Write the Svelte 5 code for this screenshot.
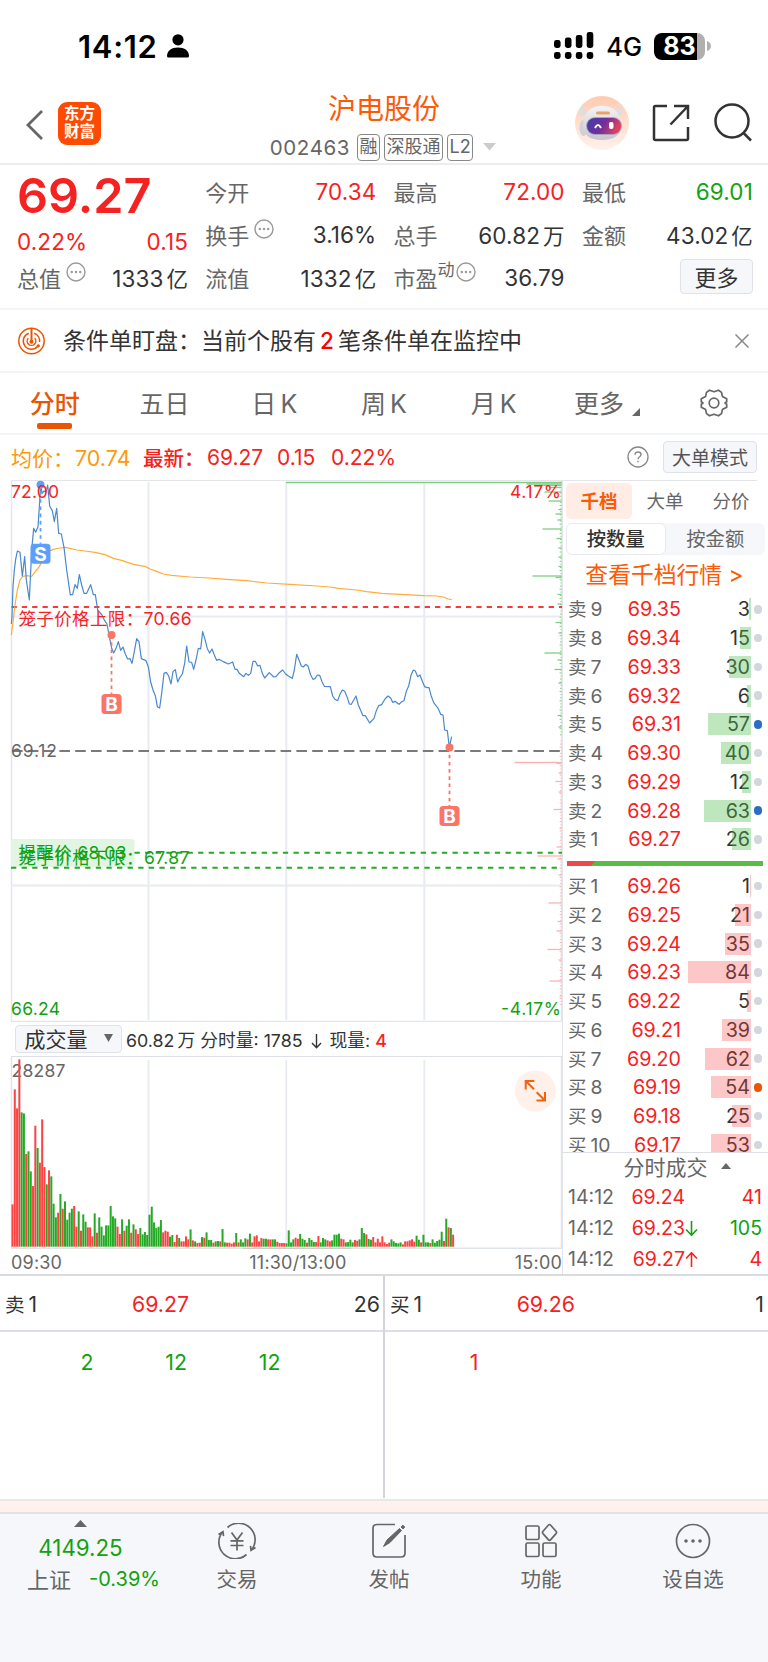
<script>
  const sells = [
    [9, '69.35', 3], [8, '69.34', 15], [7, '69.33', 30], [6, '69.32', 6], [5, '69.31', 57, 'blue'],
    [4, '69.30', 40], [3, '69.29', 12], [2, '69.28', 63, 'blue'], [1, '69.27', 26]
  ];
  const buys = [
    [1, '69.26', 1], [2, '69.25', 21], [3, '69.24', 35], [4, '69.23', 84], [5, '69.22', 5],
    [6, '69.21', 39], [7, '69.20', 62], [8, '69.19', 54, 'orange'], [9, '69.18', 25], [10, '69.17', 53]
  ];
  const trades = [
    { price: '69.24', arrow: '', qty: 41, dir: 'red' },
    { price: '69.23', arrow: 'down', qty: 105, dir: 'green' },
    { price: '69.27', arrow: 'up', qty: 4, dir: 'red' }
  ];
  const tabs = ['五日', '日 K', '周 K', '月 K'];

  // minute series, in thirds of a pixel
  const price = '34,462 36,440 39,350 43,300 47,268 52,243 60,247 67,318 74,260 79,330 88,390 95,240 101,175 107,187 114,170 118,110 122,45 126,70 132,63 138,66 143,45 149,108 157,122 163,155 170,115 176,190 184,192 192,232 200,300 211,375 218,373 225,344 232,355 238,314 245,345 252,370 260,370 272,344 280,374 286,374 293,420 306,435 314,452 321,462 328,500 335,535 341,549 348,535 355,515 362,541 369,531 376,552 383,567 390,566 396,580 403,545 410,506 417,515 424,566 438,572 445,590 452,636 459,660 466,677 472,710 479,714 485,670 492,610 499,607 506,618 513,642 519,605 526,599 533,636 540,622 547,612 554,580 560,528 567,576 575,577 581,598 588,570 595,535 602,537 608,485 615,508 622,536 629,549 636,537 643,555 650,571 657,568 670,575 685,582 698,576 705,598 711,598 718,610 731,620 738,610 745,616 752,610 759,574 766,574 773,588 780,586 787,610 794,624 808,608 821,621 828,620 838,608 848,600 857,612 865,618 870,621 877,625 883,600 890,553 897,570 904,588 910,591 917,583 924,588 932,615 939,628 945,626 952,615 959,616 966,635 973,649 991,650 998,678 1005,688 1013,692 1020,673 1027,660 1034,664 1041,680 1048,702 1054,703 1068,678 1075,705 1089,737 1096,737 1109,759 1122,745 1129,722 1136,707 1145,704 1155,687 1164,678 1172,684 1178,697 1185,694 1197,703 1204,696 1212,692 1219,664 1226,648 1233,616 1240,600 1246,603 1253,620 1260,615 1267,634 1274,650 1281,653 1287,653 1294,679 1301,698 1315,716 1322,733 1329,735 1334,780 1342,782 1348,832 1353,808 1355,800';
  const average = '34,495 40,450 45,405 52,360 60,330 68,319 80,317 95,319 107,303 118,290 130,265 145,245 160,238 180,234 196,232 210,235 230,240 255,243 285,247 315,254 340,265 365,271 400,283 438,290 450,297 470,304 490,312 515,316 570,321 625,324 680,328 740,332 800,339 870,343 950,348 990,351 1015,355 1070,360 1100,365 1145,370 1200,373 1272,377 1310,378 1330,381 1345,387 1355,389';

  // one bar per minute: height + r/g
  const volume = ('127r 472r 415r 562r 403g 400g 278r 286g 226g 182r 363r 296g 252r 382r 239r 187g 229r 211g 129g 88g ' +
    '102r 158g 114r 136g 81g 102g 114g 122r 60r 106g 48r 97g 75g 58r 58r 31r 100g 42r 88g 60g ' +
    '34g 64g 64g 122g 91g 85g 60r 38r 82g 48r 63g 82g 42r 67g 52r 38r 56g 37g 44g 35g ' +
    '96g 120g 73g 56g 60g 80g 43r 48r 45r 30g 35g 14r 36r 26g 16r 16r 31r 22r 52g 19r ' +
    '16g 11r 12r 29g 27r 43g 20g 20g 12r 16g 17g 16r 53g 13g 12r 12r 9r 13r 41g 13r ' +
    '22g 13g 25g 22r 39g 13r 31r 34r 16r 26r 24g 24g 22r 22r 22g 22g 15r 11r 11r 11r ' +
    '10g 49g 13g 22g 27r 24r 38g 24g 20g 12r 26g 20g 14g 14r 32r 13g 26g 22g 19r 16r ' +
    '19g 36g 36g 39g 24r 22r 13g 14g 21g 13g 20r 18r 22g 56g 41g 37r 23g 21g 29r 13r ' +
    '24r 13r 31r 13r 8r 12r 22g 16g 11g 10g 13g 7r 16r 16r 19r 22r 15r 33g 21g 13r ' +
    '36g 13g 13g 11r 22g 12g 17g 21g 45g 17r 84g 58r 56g 36r')
    .split(' ')
    .map((v) => ({ h: parseInt(v) / 3, up: v.endsWith('r') }));

  // resting orders by price, [y, length]
  const askLevels = [
    [484, 35], [485.5, 20], [487.5, 12], [492, 17], [501, 13], [509.5, 3], [514, 6], [520, 4], [529, 19], [538.5, 5],
    [548, 3], [557, 3], [566.5, 3], [576, 29], [577.5, 6], [594.5, 4], [604, 4], [622.5, 6], [633, 3], [653, 17],
    [660, 4], [669.5, 7], [683, 3], [715.5, 4], [727, 3]
  ];
  const bidLevels = [
    [762.5, 47], [763.5, 5], [773, 3], [781.5, 6], [792, 3], [809.5, 8], [828, 2], [847, 5], [856, 24], [859, 4],
    [875, 3], [903, 13], [921.5, 4], [931, 5], [949.5, 14], [960, 3], [981, 12], [996, 2]
  ];
  const range = (a, b, step) => Array.from({ length: Math.floor((b - a) / step) }, (_, i) => a + i * step);
</script>

{#snippet more()}
  <svg class="dots" width="20" height="20" viewBox="0 0 20 20">
    <circle cx="10" cy="10" r="9" fill="none" stroke="#999" stroke-width="1.4" />
    <circle cx="5.8" cy="10" r="1.2" /><circle cx="10" cy="10" r="1.2" /><circle cx="14.2" cy="10" r="1.2" />
  </svg>
{/snippet}

{#snippet bookRow(side, r)}
  <div class="book-row">
    <span class="lvl">{side}<i>{r[0]}</i></span>
    <span class="px red">{r[1]}</span>
    <span class="qty">
      <b class="bar" class:bid={side === '买'} style="width:{Math.max(r[2] * 0.75, 0.8)}px"></b>
      <em>{r[2]}</em>
    </span>
    <span class="dot {r[3] ?? ''}"></span>
  </div>
{/snippet}

{#snippet flag(x, y, letter, color, top)}
  <line x1={x} x2={x} y1={top} y2={y} stroke={color} stroke-width="1.800" stroke-dasharray="3.6 3.6" />
  <circle cx={x} cy={top} r="4" fill={color} />
  <rect x={x - 10} {y} width="20" height="20" rx="3.5" fill={color} />
  <text class="flag" {x} y={y + 16.8} text-anchor="middle">{letter}</text>
{/snippet}

<div class="app">
  <div class="status">
    <div class="clock">
      <span>14:12</span>
      <svg width="22" height="24" viewBox="0 0 22 24">
        <circle cx="11" cy="5.8" r="5.6" />
        <path d="M0 22C0 16.5 4.5 13.4 11 13.4S22 16.5 22 22q0 1.5-1.5 1.5h-19Q0 23.5 0 22z" />
      </svg>
    </div>
    <div class="signals">
      <svg width="40" height="28" viewBox="0 0 40 28">
        {#each [8, 10.5, 13, 16] as h, i}
          <rect x={i * 10.9} y={16 - h} width="6.6" height={h} rx="2.4" />
          <rect x={i * 10.9} y="20" width="6.6" height="7" rx="2.4" />
        {/each}
      </svg>
      <span class="net">4G</span>
      <div class="battery"><span>83</span></div>
      <svg class="nub" width="4" height="10" viewBox="0 0 4 10"><path d="M0 0q4 1.5 4 5t-4 5z" fill="#b0b0b0" /></svg>
    </div>
  </div>

  <header>
    <div class="left">
      <svg width="18" height="32" viewBox="0 0 18 32"><path d="M16 2L2 16l14 14" fill="none" stroke="#666" stroke-width="2.8" /></svg>
      <div class="logo"><span>东方</span><span>财富</span></div>
    </div>
    <div class="title">
      <h1>沪电股份</h1>
      <div class="code">
        <span>002463</span>
        <span class="tag">融</span><span class="tag">深股通</span><span class="tag">L2</span>
        <svg width="13" height="8" viewBox="0 0 13 8"><path d="M0 0h13L6.5 7.5z" fill="#ccc" /></svg>
      </div>
    </div>
    <div class="actions">
      <svg width="54" height="54" viewBox="0 0 54 54">
        <defs>
          <linearGradient id="halo" x2="0" y2="1"><stop stop-color="#ffcbb0" /><stop offset="1" stop-color="#fff2ec" /></linearGradient>
          <linearGradient id="visor" x2="1" y2=".3"><stop stop-color="#4340a5" /><stop offset=".55" stop-color="#6f2f9c" /><stop offset="1" stop-color="#e0405e" /></linearGradient>
          <linearGradient id="shell" x2="0" y2="1"><stop stop-color="#f4f4f5" /><stop offset="1" stop-color="#c6c6cd" /></linearGradient>
        </defs>
        <circle cx="27" cy="27" r="27" fill="url(#halo)" />
        <path d="M8 8Q3 15 6 21l7-4Q8 13 8 8zM46 8q3 7 0 12l-7-6q6-1 7-6z" fill="#dedee2" />
        <ellipse cx="8.500" cy="32" rx="4" ry="8" fill="#d0d0d6" />
        <path d="M8 29Q9 10 27 10t19 19q0 15-19 15T8 29z" fill="url(#shell)" />
        <rect x="11" y="21" width="36" height="18" rx="9" fill="#a9a4c2" />
        <rect x="12" y="22" width="34" height="16" rx="8" fill="url(#visor)" />
        <path d="M20 32q3-6 6 0" fill="none" stroke="#fff" stroke-width="2" />
        <rect x="34" y="26" width="4.5" height="7" rx="2" fill="#fff" />
        <rect x="21" y="15.5" width="14" height="3" rx="1.5" fill="#e9a36a" />
      </svg>
      <svg width="38" height="38" viewBox="0 0 38 38" fill="none" stroke="#333" stroke-width="2.5">
        <path d="M15 2H3.5Q2 2 2 3.5v31Q2 36 3.5 36h31q1.5 0 1.5-1.5V23M22 2h14v13M36 2L18.500 20.500" />
      </svg>
      <svg width="38" height="40" viewBox="0 0 38 40" fill="none" stroke="#333" stroke-width="2.5">
        <circle cx="18" cy="18" r="16.500" /><path d="M29 29.500l8 8" />
      </svg>
    </div>
  </header>

  <section class="quote">
    <div class="col">
      <div class="last">69.27</div>
      <div class="cell shift"><span class="red">0.22%</span><span class="red">0.15</span></div>
      <div class="cell"><label>总值{@render more()}</label><span>1333<s>亿</s></span></div>
    </div>
    <div class="col">
      <div class="cell"><label>今开</label><span class="red">70.34</span></div>
      <div class="cell"><label>换手{@render more()}</label><span>3.16%</span></div>
      <div class="cell"><label>流值</label><span>1332<s>亿</s></span></div>
    </div>
    <div class="col">
      <div class="cell"><label>最高</label><span class="red">72.00</span></div>
      <div class="cell"><label>总手</label><span>60.82<s>万</s></span></div>
      <div class="cell"><label>市盈<sup>动</sup>{@render more()}</label><span>36.79</span></div>
    </div>
    <div class="col">
      <div class="cell"><label>最低</label><span class="green">69.01</span></div>
      <div class="cell"><label>金额</label><span>43.02<s>亿</s></span></div>
      <div class="cell end"><button class="btn">更多</button></div>
    </div>
  </section>

  <section class="alert">
    <svg width="27" height="28" viewBox="0 0 27 28" fill="none" stroke="#ea5504" stroke-width="1.5">
      <circle cx="13.500" cy="14" r="12.700" />
      <path d="M10.800 6.300A8.200 8.200 0 1 0 20 19M16.200 6.300a8.200 8.200 0 0 1 5.400 8.700" />
      <path d="M10.300 11.200a4.300 4.300 0 1 0 6.400 0" />
      <path d="M13.500 1.500v13" stroke-width="2" />
      <circle cx="13.500" cy="14.800" r="1.300" fill="#ea5504" /><circle cx="20.300" cy="18.800" r=".9" fill="#ea5504" />
    </svg>
    <p>条件单盯盘：当前个股有<b>2</b>笔条件单在监控中</p>
    <svg width="14" height="14" viewBox="0 0 14 14"><path d="M.5.5l13 13m0-13l-13 13" stroke="#888" stroke-width="1.500" /></svg>
  </section>

  <nav class="tabs">
    <span class="on">分时</span>
    {#each tabs as t}<span>{t}</span>{/each}
    <span class="drop">更多<svg width="9" height="9" viewBox="0 0 9 9"><path d="M8 0v8H0z" fill="#666" /></svg></span>
    <span>
      <svg width="30" height="30" viewBox="0 0 30 30" fill="none" stroke="#666" stroke-width="1.700">
        <path d="M10.500 2.200L15 3.800l4.500-1.600 3 2.200.9 4 4.300 2.400v2.900L26 15l1.700 1.300v2.900l-4.300 2.400-.9 4-3 2.200-4.500-1.600-4.500 1.600-3-2.200-.9-4-4.300-2.400v-2.900L4 15l-1.700-1.300v-2.900l4.300-2.400.9-4z" stroke-linejoin="round" />
        <circle cx="15" cy="15" r="4.800" />
      </svg>
    </span>
  </nav>

  <div class="info">
    <span class="avg">均价：<i>70.74</i></span>
    <span class="red new">最新：</span><span class="red n1">69.27</span><span class="red n2">0.15</span><span class="red">0.22%</span>
    <svg width="22" height="22" viewBox="0 0 22 22">
      <circle cx="11" cy="11" r="10" fill="none" stroke="#888" stroke-width="1.300" />
      <path d="M8 8.800Q8 6 11 6t3 2.600Q14 10 12.300 11 11 11.800 11 13.200M11 14.800v1.500" fill="none" stroke="#888" stroke-width="1.400" />
    </svg>
    <button class="btn mode">大单模式</button>
  </div>

  <main>
    <div class="charts">
      <svg class="price" width="562" height="542" viewBox="0 480 562 542">
        <g fill="none" stroke="#e3e6ee" stroke-width="1.500">
          <path d="M11.500 480V1022M561.500 480V1022M11 1021.500H562" />
          <path d="M148.500 482V1020M286.300 482V1020M424.300 482V1020M11 616.500H562M11 885.500H562" stroke-width="2" stroke="#e8ebf2" />
        </g>
        <g stroke="#7fce82">
          <path d="M286 482.500H562" stroke-width="1.300" />
          {#each askLevels as [y, w]}<line x1={561.5 - w} x2="561.500" y1={y} y2={y} stroke-width="1.300" />{/each}
          {#each range(490, 740, 3.1) as y, i}<line x1={560.6 - (i % 3) * 0.5} x2="561.500" y1={y} y2={y} />{/each}
        </g>
        <g stroke="#fdb3b3">
          {#each bidLevels as [y, w]}<line x1={561.5 - w} x2="561.500" y1={y} y2={y} stroke-width="1.300" />{/each}
          {#each range(741, 1010, 3.1) as y, i}<line x1={560.6 - (i % 3) * 0.5} x2="561.500" y1={y} y2={y} />{/each}
        </g>
        <rect x="11" y="839" width="123.500" height="28" rx="3" fill="#e2f5e2" />
        <g fill="none" stroke-width="2">
          <path d="M11.500 607H562" stroke="#f43c3c" stroke-dasharray="5.300 5.030" />
          <path d="M12 751H562" stroke="#7a7a7a" stroke-dasharray="10.600 5.200" />
          <path d="M134.500 852.700H562M11 867.700H562" stroke="#25ab25" stroke-dasharray="5.300 5.300" />
        </g>
        <g transform="translate(0 470) scale(.33333)" fill="none" stroke-width="3.600" stroke-linejoin="round">
          <polyline points={average} stroke="#ffac3b" />
          <polyline points={price} stroke="#4a88cf" />
        </g>
        {@render flag(40.5, 543.8, 'S', '#5c9ff8', 484.8)}
        {@render flag(111.5, 694, 'B', '#fb7465', 635)}
        {@render flag(449.5, 806, 'B', '#fb7465', 747.5)}
        <g class="labels">
          <text x="11" y="498" fill="#f62222" textLength="48">72.00</text>
          <text x="561" y="498" fill="#f62222" text-anchor="end" textLength="51">4.17%</text>
          <text x="18.500" y="624.500" fill="#f62222" textLength="173">笼子价格上限：70.66</text>
          <text x="11" y="756.500" fill="#666" textLength="46">69.12</text>
          <text x="18.500" y="858.500" fill="#10a210" textLength="108">提醒价 68.03</text>
          <text x="18.500" y="863.500" fill="#10a210" textLength="171">笼子价格下限：67.87</text>
          <text x="11" y="1015" fill="#10a210" textLength="49">66.24</text>
          <text x="561" y="1015" fill="#10a210" text-anchor="end" textLength="60">-4.17%</text>
        </g>
      </svg>

      <div class="volbar">
        <button class="btn pick">成交量<svg width="9" height="8" viewBox="0 0 9 8"><path d="M0 0h9L4.500 8z" fill="#666" /></svg></button>
        <span>60.82<s>万</s> 分时量: 1785 <svg width="17" height="15" viewBox="-3 0 17 15"><path d="M5.500 0v13.500M1 9l4.500 4.800L10 9" fill="none" stroke="#333" stroke-width="1.400" /></svg> 现量: <b class="red">4</b></span>
      </div>

      <svg class="volume" width="562" height="192" viewBox="0 1057 562 192">
        <g fill="none" stroke="#dfe3ea" stroke-width="1.400">
          <path d="M11.500 1057V1248M561.500 1057V1248M11 1248.300H562" />
          <path d="M148.500 1060V1247M286.300 1060V1247M424.300 1060V1247" stroke-width="1.800" stroke="#e8ebf2" />
        </g>
        <path d="M243 1248.500h107.500" stroke="#ccc" stroke-width="1.500" />
        <text x="11.500" y="1077" fill="#666" textLength="54">28287</text>
        {#each volume as v, i}
          <rect x={11.5 + i * 2.283} y={1246.7 - v.h} width="2" height={v.h} fill={v.up ? '#fb4343' : '#25aa25'} />
        {/each}
        <circle cx="535.300" cy="1091" r="20.500" fill="#fff0e9" />
        <path d="M525.700 1089.500v-8.500h8.700M526 1081.300l8 8M536.500 1100.500h8.500v-8.500M544.700 1100.200l-8-8" fill="none" stroke="#ee6414" stroke-width="2" />
      </svg>

      <div class="times"><span>09:30</span><span class="noon">11:30/13:00</span><span>15:00</span></div>
    </div>

    <aside>
      <div class="modes"><span class="on">千档</span><span>大单</span><span>分价</span></div>
      <div class="seg"><span class="on">按数量</span><span>按金额</span></div>
      <div class="link">查看千档行情 &gt;</div>
      <div class="book">
        {#each sells as r}{@render bookRow('卖', r)}{/each}
      </div>
      <svg class="ratio" width="196" height="5" viewBox="0 0 196 5">
        <path d="M0 0h196v5H0z" fill="#5bbb44" /><path d="M0 0h28l-4 5H0z" fill="#ef4a4a" />
      </svg>
      <div class="book bids">
        {#each buys as r}{@render bookRow('买', r)}{/each}
      </div>
      <div class="ticks">
        <div class="ticks-head">分时成交<svg width="10" height="6" viewBox="0 0 10 6"><path d="M0 6h10L5 0z" fill="#666" /></svg></div>
        {#each trades as t}
          <div class="tick">
            <span class="t">14:12</span>
            <span class="p red">{t.price}</span>
            <span class="a {t.dir}">
              {#if t.arrow}
                <svg width="13" height="15" viewBox="0 0 13 15" class:flip={t.arrow === 'up'}>
                  <path d="M6.500 0v14M1 8.500l5.500 5.700L12 8.500" fill="none" stroke="currentColor" stroke-width="1.600" />
                </svg>
              {/if}
            </span>
            <span class="q {t.dir}">{t.qty}</span>
          </div>
        {/each}
      </div>
    </aside>
  </main>

  <section class="depth">
    <div class="half">
      <div class="best"><span>卖<i>1</i></span><span class="red mid">69.27</span><span>26</span></div>
      <div class="lots green"><span>2</span><span>12</span><span>12</span></div>
    </div>
    <div class="half">
      <div class="best"><span>买<i>1</i></span><span class="red mid">69.26</span><span>1</span></div>
      <div class="lots red"><span>1</span></div>
    </div>
  </section>

  <div class="strip"></div>

  <footer>
    <div class="index">
      <svg width="13" height="7" viewBox="0 0 13 7"><path d="M0 7h13L6.500 0z" fill="#666" /></svg>
      <div class="green">4149.25</div>
      <div class="row"><span>上证</span><span class="green pct">-0.39%</span></div>
    </div>
    <div class="item">
      <svg width="40" height="36" viewBox="0 0 40 36" fill="none" stroke="#666" stroke-width="1.700">
        <path d="M10.500 4.500A16.500 16.500 0 0 1 34.500 27M38.500 24.500l-4.500 2.800-.5-4.500M29.500 31.500A16.500 16.500 0 0 1 5.500 9M1.500 11.500L6 8.700l.5 4.500" />
        <path d="M14.500 9.500l5.500 7.500 5.500-7.500M20 17v10.500M13.500 17.800h13M13.500 22.500h13" />
      </svg>
      <span>交易</span>
    </div>
    <div class="item">
      <svg width="36" height="36" viewBox="0 0 36 36" fill="none" stroke="#666" stroke-width="1.700">
        <path d="M24 1.500H6Q2 1.500 2 5.500V30q0 4 4 4h24q4 0 4-4V12" />
        <path d="M12.500 23.500L16 17 28.500 5.500l2 2L19 19.500zM30 4l1.800-1.800 2 1.800L32 6z" fill="#666" stroke-width="1" />
      </svg>
      <span>发帖</span>
    </div>
    <div class="item">
      <svg width="34" height="36" viewBox="0 0 34 36" fill="none" stroke="#666" stroke-width="1.700">
        <rect x="2" y="3" width="13" height="13.500" rx="1.500" /><rect x="2" y="20" width="13" height="13.500" rx="1.500" />
        <rect x="19" y="20" width="13" height="13.500" rx="1.500" />
        <path d="M24.300 2.200q1.200-1.400 2.400 0l5.300 6q1 1.200 0 2.400l-5.300 6q-1.200 1.400-2.400 0l-5.300-6q-1-1.200 0-2.400z" />
      </svg>
      <span>功能</span>
    </div>
    <div class="item">
      <svg width="36" height="36" viewBox="0 0 36 36" fill="#666">
        <circle cx="18" cy="18" r="16.500" fill="none" stroke="#666" stroke-width="1.700" />
        <circle cx="11" cy="18" r="1.800" /><circle cx="18" cy="18" r="1.800" /><circle cx="25" cy="18" r="1.800" />
      </svg>
      <span>设自选</span>
    </div>
  </footer>
</div>

<style>
  :global(body) {
    background: #fff;
  }

  .app {
    width: 768px;
    height: 1662px;
    overflow: hidden;
    font-family: Inter, "Noto Sans CJK SC", sans-serif;
    font-size: 22px;
    color: #333;
    background: #fff;
    white-space: nowrap;
  }

  .app * {
    box-sizing: border-box;
  }

  svg {
    display: block;
    flex: none;
  }

  i, em, s {
    font-style: normal;
    text-decoration: none;
  }

  .red {
    color: #f62222;
  }

  .green {
    color: #10a210;
  }

  .btn {
    display: flex;
    align-items: center;
    justify-content: center;
    padding: 0 0 2px;
    border: 1.5px solid #dfe2ea;
    border-radius: 4px;
    background: #f6f7fa;
    font: inherit;
    color: #333;
  }

  .status {
    height: 92px;
    display: flex;
    justify-content: space-between;
    align-items: center;
    padding: 0 57px 0 78px;
    color: #000;
  }

  .clock, .signals {
    display: flex;
    align-items: center;
  }

  .clock {
    gap: 9px;
    font-size: 31px;
    font-weight: 600;
    letter-spacing: .7px;
  }

  .net {
    margin: 0 12px 0 12px;
    font-size: 25.5px;
    font-weight: 500;
  }

  .battery {
    width: 51px;
    height: 27px;
    border-radius: 8px;
    background: linear-gradient(90deg, #000 43px, #b0b0b0 43px);
    display: flex;
    align-items: center;
    justify-content: center;
    color: #fff;
    font-size: 25px;
    font-weight: 700;
  }

  .nub {
    margin-left: 2px;
  }

  header {
    height: 73px;
    display: grid;
    grid-template-columns: 240px 1fr 240px;
    border-bottom: 2px solid #ededee;
  }

  .left {
    display: flex;
    align-items: center;
    gap: 14px;
    padding: 0 0 9px 26px;
  }

  .left svg {
    margin-top: 3px;
  }

  .logo {
    width: 43px;
    height: 43px;
    border-radius: 9px;
    background: #fe4a03;
    color: #fff;
    font-size: 15.5px;
    font-weight: 700;
    line-height: 18.5px;
    display: flex;
    flex-direction: column;
    align-items: center;
    justify-content: center;
  }

  h1 {
    margin: 0;
    font-size: 28px;
    line-height: 35px;
    font-weight: 400;
    color: #fd5a08;
    text-align: center;
  }

  .code {
    display: flex;
    align-items: center;
    justify-content: center;
    gap: 4px;
    height: 28px;
    margin: 6px 0 0 -2px;
    font-size: 20.5px;
    color: #666;
  }

  .code > span:first-child {
    margin-right: 3px;
    letter-spacing: .6px;
  }

  .tag {
    height: 27px;
    padding: 0 1.5px;
    border: 1.5px solid #888;
    border-radius: 4px;
    font-size: 18px;
    line-height: 23px;
  }

  .code svg {
    margin-left: 6px;
  }

  .actions {
    display: flex;
    align-items: center;
    gap: 23.5px;
    padding: 0 0 9px 46.5px;
  }

  .quote {
    height: 145px;
    display: grid;
    grid-template-columns: repeat(4, 171px);
    gap: 17.3px;
    padding: 5px 15px 0 17px;
    border-bottom: 2px solid #f5f5f6;
  }

  .cell {
    height: 43px;
    display: flex;
    align-items: center;
    justify-content: space-between;
  }

  .cell > span {
    font-size: 22.5px;
    letter-spacing: .1px;
  }

  .shift {
    padding-top: 14px;
  }

  .end {
    justify-content: flex-end;
  }

  .end .btn {
    width: 73px;
    height: 35px;
    margin-top: -2px;
  }

  .last {
    height: 43px;
    font-size: 48.6px;
    line-height: 52px;
    font-weight: 600;
    color: #f62222;
  }

  label {
    display: flex;
    color: #666;
    margin-top: -2px;
  }

  label .dots {
    margin: 1px 0 0 5px;
    fill: #999;
  }

  sup {
    font-size: 17px;
    line-height: 18px;
  }

  sup + .dots {
    margin-left: 1px !important;
  }

  .cell s, .volbar s {
    margin-left: 3px;
  }

  .cell s {
    font-size: 21.5px;
  }

  .alert {
    height: 63px;
    display: flex;
    align-items: center;
    padding: 0 19px 0 18px;
    border-bottom: 2px solid #f5f5f6;
  }

  .alert p {
    flex: 1;
    margin: -3px 0 0 18px;
    font-size: 23px;
  }

  .alert b {
    margin: 0 4px;
    font-weight: 500;
    color: #f00;
    font-size: 22.5px;
  }

  .tabs {
    height: 62px;
    display: grid;
    grid-template-columns: repeat(7, 1fr);
    border-bottom: 2px solid #f3f4f6;
    font-size: 25px;
    word-spacing: -3px;
    color: #666;
  }

  .tabs span {
    position: relative;
    display: flex;
    align-items: center;
    justify-content: center;
    padding-bottom: 3px;
  }

  .tabs span:last-child {
    padding: 0 0 0 1px;
  }

  .tabs .on {
    color: #ea5504;
    font-weight: 500;
  }

  .tabs .on::after {
    content: '';
    position: absolute;
    bottom: 4px;
    width: 35px;
    height: 6px;
    border-radius: 2px;
    background: #ea5504;
  }

  .drop svg {
    margin: 21px -8px 0 8px;
  }

  .info {
    height: 45px;
    display: flex;
    align-items: center;
    padding: 0 11px 1px;
    font-size: 21px;
  }

  .avg {
    width: 132px;
    color: #fd9a0c;
  }

  .avg i {
    margin-left: 1px;
    font-size: 21.5px;
  }

  .new {
    width: 64px;
    font-size: 20.5px;
    font-weight: 500;
  }

  .n1 {
    width: 70px;
  }

  .n2 {
    width: 54px;
  }

  .info svg {
    margin-left: auto;
  }

  .mode {
    width: 94px;
    height: 32px;
    margin-left: 14px;
    font-size: 19px;
    color: #555;
  }

  main {
    height: 796px;
    display: flex;
    border-bottom: 2px solid #d9dbe1;
    background: linear-gradient(#e3e5e9, #e3e5e9) 11px 0 / 746px 1px no-repeat;
  }

  .charts {
    width: 562px;
  }

  .labels, .volume text {
    font-size: 17.5px;
  }

  .flag {
    font-size: 19px;
    font-weight: 700;
    fill: #fff;
  }

  .volbar {
    height: 35px;
    margin-left: 11px;
    padding-left: 4px;
    display: flex;
    align-items: center;
    gap: 4px;
    border-bottom: 1.5px solid #dcdfe6;
    font-size: 17.8px;
  }

  .volbar > span {
    margin-top: -1px;
  }

  .volbar span svg {
    display: inline;
    vertical-align: -2px;
  }

  .volbar b {
    font-weight: 500;
  }

  .pick {
    width: 107px;
    height: 28px;
    gap: 16px;
    font-size: 21px;
  }

  .times {
    height: 27px;
    display: flex;
    justify-content: space-between;
    align-items: center;
    padding: 0 0 1px 11px;
    font-size: 18px;
    letter-spacing: .2px;
    color: #666;
  }

  .noon {
    margin-left: 19px;
  }

  aside {
    flex: 1;
    border-left: 1px solid #e3e5e9;
  }

  .modes {
    height: 36px;
    margin: 3px 3px 0;
    display: grid;
    grid-template-columns: repeat(3, 66px);
    font-size: 18.5px;
    color: #666;
  }

  .modes span, .seg span {
    display: flex;
    align-items: center;
    justify-content: center;
    padding-bottom: 2px;
  }

  .modes .on {
    border-radius: 5px;
    background: #ffede5;
    color: #fd5a08;
    font-weight: 700;
  }

  .seg {
    height: 32px;
    margin: 4px 0 0 3px;
    width: 199px;
    display: grid;
    grid-template-columns: 1fr 1fr;
    border-radius: 6px;
    background: #f6f7fa;
    font-size: 19.3px;
    color: #666;
  }

  .seg .on {
    border: 1px solid #e8eaee;
    border-radius: 6px;
    background: #fff;
    color: #333;
    font-weight: 500;
  }

  .link {
    height: 40px;
    line-height: 40px;
    font-size: 22.8px;
    color: #fd5a08;
    text-align: center;
    padding-right: 2px;
  }

  .book-row {
    height: 28.75px;
    display: flex;
    align-items: center;
    padding-left: 5px;
    font-size: 19.7px;
  }

  .lvl {
    width: 48px;
    margin-top: -2px;
    color: #666;
    font-size: 18.5px;
  }

  .lvl i, .best i {
    margin-left: 4px;
    font-size: 19.3px;
  }

  .px {
    width: 65px;
    text-align: right;
  }

  .qty {
    position: relative;
    width: 70px;
    height: 22px;
    padding-right: 1px;
    line-height: 22px;
    text-align: right;
  }

  .bar {
    position: absolute;
    right: 0;
    top: 0;
    height: 22px;
    background: rgba(80, 190, 80, .37);
  }

  .bar.bid {
    background: rgba(248, 70, 70, .3);
  }

  .dot {
    width: 8.5px;
    height: 8.5px;
    margin-left: 2.5px;
    border-radius: 50%;
    background: #d3d6dd;
  }

  .dot.blue {
    background: #2c6cc4;
  }

  .dot.orange {
    background: #ea5504;
  }

  .ratio {
    margin: 7.5px 0 5.5px 4px;
  }

  .bids {
    height: 280.5px;
    overflow: hidden;
  }

  .ticks {
    border-top: 1.5px solid #dcdfe6;
    font-size: 19.5px;
  }

  .ticks-head {
    height: 28px;
    display: flex;
    align-items: center;
    justify-content: center;
    gap: 13px;
    padding: 0 0 3px 23px;
    font-size: 21px;
    color: #666;
  }

  .tick {
    height: 31.3px;
    display: flex;
    align-items: center;
    padding: 0 6px 0 5px;
  }

  .t {
    width: 62px;
    color: #666;
  }

  .p {
    width: 55px;
    text-align: right;
  }

  .flip {
    transform: rotate(180deg);
  }

  .q {
    margin-left: auto;
  }

  .depth {
    height: 223px;
    display: grid;
    grid-template-columns: 384px 384px;
    padding-bottom: 1px;
    font-size: 21.3px;
  }

  .half + .half {
    border-left: 2px solid #d3d5db;
    margin-left: -1px;
  }

  .best {
    height: 56px;
    display: grid;
    grid-template-columns: 1fr 1fr 1fr;
    align-items: center;
    padding: 2px 4px 0 5px;
    border-bottom: 2px solid #dddfe4;
  }

  .best span:first-child {
    font-size: 19.5px;
    margin-top: -2px;
  }

  .best i {
    font-size: 21px;
  }

  .best span:last-child {
    text-align: right;
  }

  .best .mid {
    padding-left: 2px;
  }

  .lots {
    display: flex;
    padding-top: 17px;
  }

  .lots span {
    width: 93.5px;
    text-align: right;
  }

  .strip {
    height: 15px;
    border-top: 2px solid #eae8e8;
    border-bottom: 2px solid #dfe2e8;
    background: #fff2ed;
  }

  footer {
    height: 149px;
    display: grid;
    grid-template-columns: 161px repeat(4, 152px);
    background: #f6f7fa;
    font-size: 20.5px;
    color: #666;
  }

  .index {
    display: flex;
    flex-direction: column;
    align-items: center;
    padding-top: 6px;
  }

  .index > .green {
    font-size: 22.3px;
    line-height: 42px;
  }

  .index .row {
    display: flex;
    align-items: center;
    gap: 18px;
    height: 20px;
    margin-left: 26px;
  }

  .index .row span:first-child {
    font-size: 22px;
    margin-top: -3px;
  }

  .index .pct {
    font-size: 20px;
  }

  .item {
    display: flex;
    flex-direction: column;
    align-items: center;
    padding-top: 9px;
  }

  .item span {
    line-height: 41px;
  }
</style>
